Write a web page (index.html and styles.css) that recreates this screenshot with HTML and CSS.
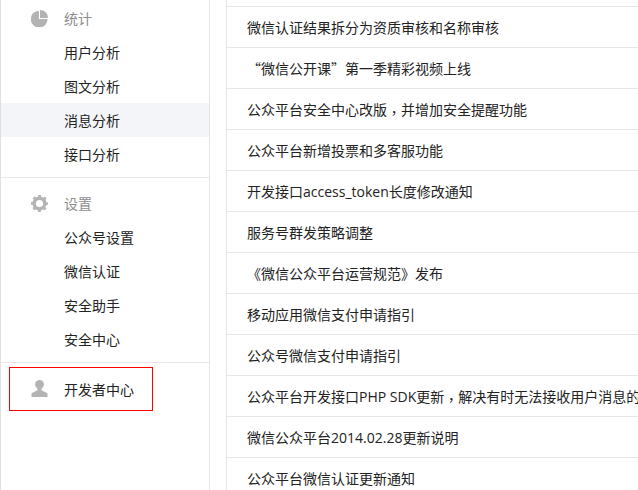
FILE: index.html
```html
<!DOCTYPE html>
<html lang="zh">
<head>
<meta charset="utf-8">
<title>开发者中心</title>
<link rel="stylesheet" href="styles.css">
</head>
<body>
<div class="page">
  <aside class="sidebar">
    <section class="group group-first">
      <div class="head">
        <svg class="icon" viewBox="0 0 17 17"><path d="M7.900 .7V9.100H16.600A8.400 8.400 0 1 1 7.900 .7Z" fill="#b3b3b3"/><path d="M9 0A8 8 0 0 1 17 8H9Z" fill="#b3b3b3"/></svg>
        <span>统计</span>
      </div>
      <a class="item">用户分析</a>
      <a class="item">图文分析</a>
      <a class="item active">消息分析</a>
      <a class="item">接口分析</a>
    </section>
    <section class="group group-second">
      <div class="head">
        <svg class="icon" viewBox="0 0 18 18"><circle cx="9" cy="9" r="5.600" fill="none" stroke="#b3b3b3" stroke-width="3.600"/><circle cx="9" cy="9" r="8" fill="none" stroke="#b3b3b3" stroke-width="2" stroke-dasharray="3.140 3.140" stroke-dashoffset="1.570"/></svg>
        <span>设置</span>
      </div>
      <a class="item">公众号设置</a>
      <a class="item">微信认证</a>
      <a class="item">安全助手</a>
      <a class="item">安全中心</a>
    </section>
    <section class="dev">
      <div class="dev-box">
        <svg class="icon" viewBox="0 0 17 17"><ellipse cx="8.500" cy="4.600" rx="4.400" ry="4.600" fill="#b3b3b3"/><path d="M6.500 8h4v2.300l5.400 2.700c.4.200.6.500.6.900V17H.5v-3.100c0-.4.200-.7.600-.9L6.500 10.300Z" fill="#b3b3b3"/></svg>
        <span>开发者中心</span>
      </div>
    </section>
  </aside>
  <main class="main">
    <ul class="list">
      <li>微信认证结果拆分为资质审核和名称审核</li>
      <li><span class="cjk">“</span>微信公开课<span class="cjk">”</span>第一季精彩视频上线</li>
      <li>公众平台安全中心改版<span class="comma" lang="zh-Hant">，</span>并增加安全提醒功能</li>
      <li>公众平台新增投票和多客服功能</li>
      <li>开发接口access_token长度修改通知</li>
      <li>服务号群发策略调整</li>
      <li>《微信公众平台运营规范》发布</li>
      <li>移动应用微信支付申请指引</li>
      <li>公众号微信支付申请指引</li>
      <li>公众平台开发接口PHP SDK更新<span class="comma" lang="zh-Hant">，</span>解决有时无法接收用户消息的问题</li>
      <li>微信公众平台2014.02.28更新说明</li>
      <li>公众平台微信认证更新通知</li>
    </ul>
  </main>
</div>
</body>
</html>
```
FILE: styles.css
```css
* { box-sizing: border-box; }
html, body { margin: 0; padding: 0; height: 100%; overflow: hidden; background: #fff; }
body { font-family: "Open Sans", "Noto Sans CJK SC", sans-serif; font-size: 14px; color: #222; }
.page { display: flex; height: 490px; width: 638px; }
.sidebar { width: 210px; flex: none; border-left: 1px solid #e0e0e0; border-right: 1px solid #e4e4e4; }
.group { border-bottom: 1px solid #e7e7eb; padding-bottom: 6px; }
.group-first { padding-top: 1px; }
.group-second { padding-top: 8px; }
.head { height: 34px; display: flex; align-items: center; padding: 1px 0 0 30px; color: #8d8d8d; line-height: 36px; }
.head .icon { margin-right: 16px; }
.icon { width: 17px; height: 17px; flex: none; }
.item { display: block; height: 34px; line-height: 36px; padding-left: 63px; }
.active { background: #f4f5f9; }
.dev { padding: 4px 0 0 8px; }
.dev-box { width: 144px; height: 44px; border: 1px solid #f00; display: flex; align-items: center; padding: 0 0 1px 21px; }
.dev-box .icon { margin-right: 16px; }
.main { flex: 1; min-width: 0; margin-left: 16px; border-left: 1px solid #e4e4e4; padding-top: 6px; overflow: hidden; }
.list { list-style: none; margin: 0; padding: 0; }
.list li { height: 41px; line-height: 42px; padding-left: 20px; border-top: 1px solid #e7e7eb; white-space: nowrap; overflow: hidden; }
.cjk { font-family: "Noto Sans CJK SC", sans-serif; line-height: 1; }
.comma { font-family: "Noto Sans CJK TC", sans-serif; line-height: 1; vertical-align: -3px; }
```
